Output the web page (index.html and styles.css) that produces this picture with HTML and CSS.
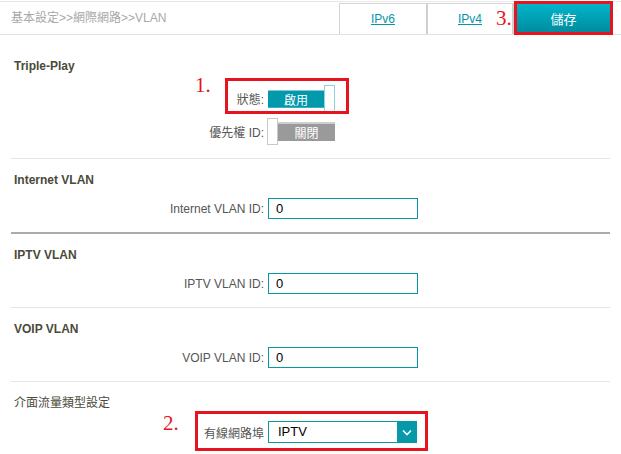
FILE: index.html
```html
<!DOCTYPE html>
<html lang="zh-Hant">
<head>
<meta charset="utf-8">
<title>VLAN</title>
<link rel="stylesheet" href="styles.css">
</head>
<body>
<header class="topbar">
  <div class="crumb">基本設定&gt;&gt;網際網路&gt;&gt;VLAN</div>
  <nav class="tabs">
    <a class="tab" href="#">IPv6</a>
    <a class="tab" href="#">IPv4</a>
    <div class="save-wrap">
      <span class="mark-num mark-3">3.</span>
      <button class="save">儲存</button>
    </div>
  </nav>
</header>

<section class="section first">
  <h2 class="heading">Triple-Play</h2>
  <div class="field">
    <span class="label">狀態:</span>
    <div class="toggle on"><span class="bar">啟用</span><span class="knob"></span></div>
    <span class="mark-box box-1"></span>
    <span class="mark-num mark-1">1.</span>
  </div>
  <div class="field">
    <span class="label">優先權 ID:</span>
    <div class="toggle off"><span class="knob"></span><span class="bar">關閉</span></div>
  </div>
</section>

<section class="section">
  <h2 class="heading">Internet VLAN</h2>
  <div class="field">
    <span class="label">Internet VLAN ID:</span>
    <input class="text" type="text" value="0">
  </div>
</section>

<section class="section strong">
  <h2 class="heading">IPTV VLAN</h2>
  <div class="field">
    <span class="label">IPTV VLAN ID:</span>
    <input class="text" type="text" value="0">
  </div>
</section>

<section class="section">
  <h2 class="heading">VOIP VLAN</h2>
  <div class="field">
    <span class="label">VOIP VLAN ID:</span>
    <input class="text" type="text" value="0">
  </div>
</section>

<section class="section">
  <h2 class="heading plain">介面流量類型設定</h2>
  <div class="field">
    <span class="label">有線網路埠</span>
    <div class="select">
      <span class="select-value">IPTV</span>
      <span class="select-arrow"><svg width="10" height="7" viewBox="0 0 10 7"><path d="M1 1.5 L5 5.5 L9 1.5" fill="none" stroke="#fff" stroke-width="1.6"/></svg></span>
    </div>
    <span class="mark-box box-2"></span>
    <span class="mark-num mark-2">2.</span>
  </div>
</section>
</body>
</html>
```

FILE: styles.css
```css
* { box-sizing: border-box; }
body {
  margin: 0;
  width: 621px;
  background: #fff;
  color: #555;
  font-family: "Liberation Sans", Arial, "Noto Sans CJK TC", sans-serif;
  font-size: 12px;
}

/* top bar */
.topbar {
  display: flex;
  justify-content: space-between;
  height: 34px;
  margin-top: 1px;
  border-top: 1px solid #e8e8e8;
  border-bottom: 1px solid #e0e0e0;
}
.crumb {
  padding-left: 11px;
  line-height: 32px;
  color: #a8a8a8;
  font-size: 12px;
}
.tabs {
  display: flex;
  align-items: flex-start;
  padding-right: 8px;
}
.tab {
  display: block;
  margin-top: 1px;
  height: 31px;
  line-height: 31px;
  text-align: center;
  color: #0596a6;
  text-decoration: underline;
  border-top: 1px solid #d4d4d4;
  border-left: 1px solid #d4d4d4;
  border-right: 2px solid #d0d0d0;
  width: 89px;
}
.tab + .tab { border-left: none; width: 86px; }
.save-wrap {
  position: relative;
  width: 99px;
  height: 34px;
  border: 3px solid #e5141e;
  margin-top: -1px;
}
.save {
  display: block;
  width: 100%;
  height: 100%;
  border: 0;
  margin: 0;
  padding: 0;
  background: linear-gradient(#00b5cb, #008c9e);
  color: #fff;
  font-family: "Noto Sans CJK TC", sans-serif;
  font-size: 13px;
}

/* annotations */
.mark-num {
  position: absolute;
  color: #e5141e;
  font-family: "Liberation Serif", "Times New Roman", serif;
  font-size: 21px;
  line-height: 22px;
}
.mark-3 { left: -21px; top: 3px; }
.mark-1 { left: 181px; top: -11px; }
.mark-2 { left: 149px; top: -9px; }
.mark-box {
  position: absolute;
  border: 3px solid #e5141e;
  pointer-events: none;
}
.box-1 { left: 211px; top: -7px; width: 124px; height: 36px; }
.box-2 { left: 181px; top: -10px; width: 233px; height: 40px; }

/* sections */
.section {
  margin: 0 11px;
  padding: 14px 0 13px 3px;
  border-top: 1px solid #e6e6e6;
}
.section.first {
  border-top: none;
  padding-top: 24px;
}
.section.strong { border-top: 2px solid #ababab; padding-top: 14px; }
.heading {
  margin: 0 0 11px;
  font-size: 12px;
  line-height: 14px;
  font-weight: bold;
  color: #4a4a3a;
}
.heading.plain { font-weight: normal; color: #4a4a3a; }
.first .heading { margin-bottom: 12px; }

.field {
  position: relative;
  display: grid;
  grid-template-columns: 250px auto;
  column-gap: 4px;
  align-items: center;
  justify-items: start;
}
.field + .field { margin-top: 6px; }
.label {
  justify-self: end;
  color: #555;
  font-size: 12px;
}

/* toggles */
.toggle { display: flex; align-items: center; }
.toggle .knob {
  width: 11px;
  height: 27px;
  background: #fff;
  border: 1px solid #c9c9c9;
}
.toggle.on .knob { border-color: #8fd2da; }
.toggle .bar {
  color: #fff;
  text-align: center;
  font-family: "Noto Sans CJK TC", sans-serif;
  font-size: 12px;
}
.toggle.on .bar {
  width: 56px;
  height: 18px;
  line-height: 17px;
  background: #0199ab;
  border-top: 1px solid #7fcbd4;
  border-bottom: 1px solid #39b0be;
}
.toggle.off { margin-left: -1px; }
.toggle.off .bar {
  width: 57px;
  height: 19px;
  line-height: 18px;
  background: #9a9a9a;
  border-top: 2px solid #cfcfcf;
}

/* inputs */
.text {
  width: 150px;
  height: 21px;
  margin: 0;
  padding: 0 7px;
  border: 1px solid #0796a6;
  font-family: "Liberation Sans", Arial, sans-serif;
  font-size: 13px;
  color: #000;
  background: #fff;
}
.select {
  display: flex;
  width: 149px;
  height: 22px;
  border: 1px solid #0796a6;
  background: #fff;
}
.select-value {
  flex: 1;
  padding-left: 9px;
  line-height: 20px;
  color: #000;
  font-size: 13px;
}
.select-arrow {
  width: 19px;
  background: #0599a9;
  display: flex;
  align-items: center;
  justify-content: center;
}
```
